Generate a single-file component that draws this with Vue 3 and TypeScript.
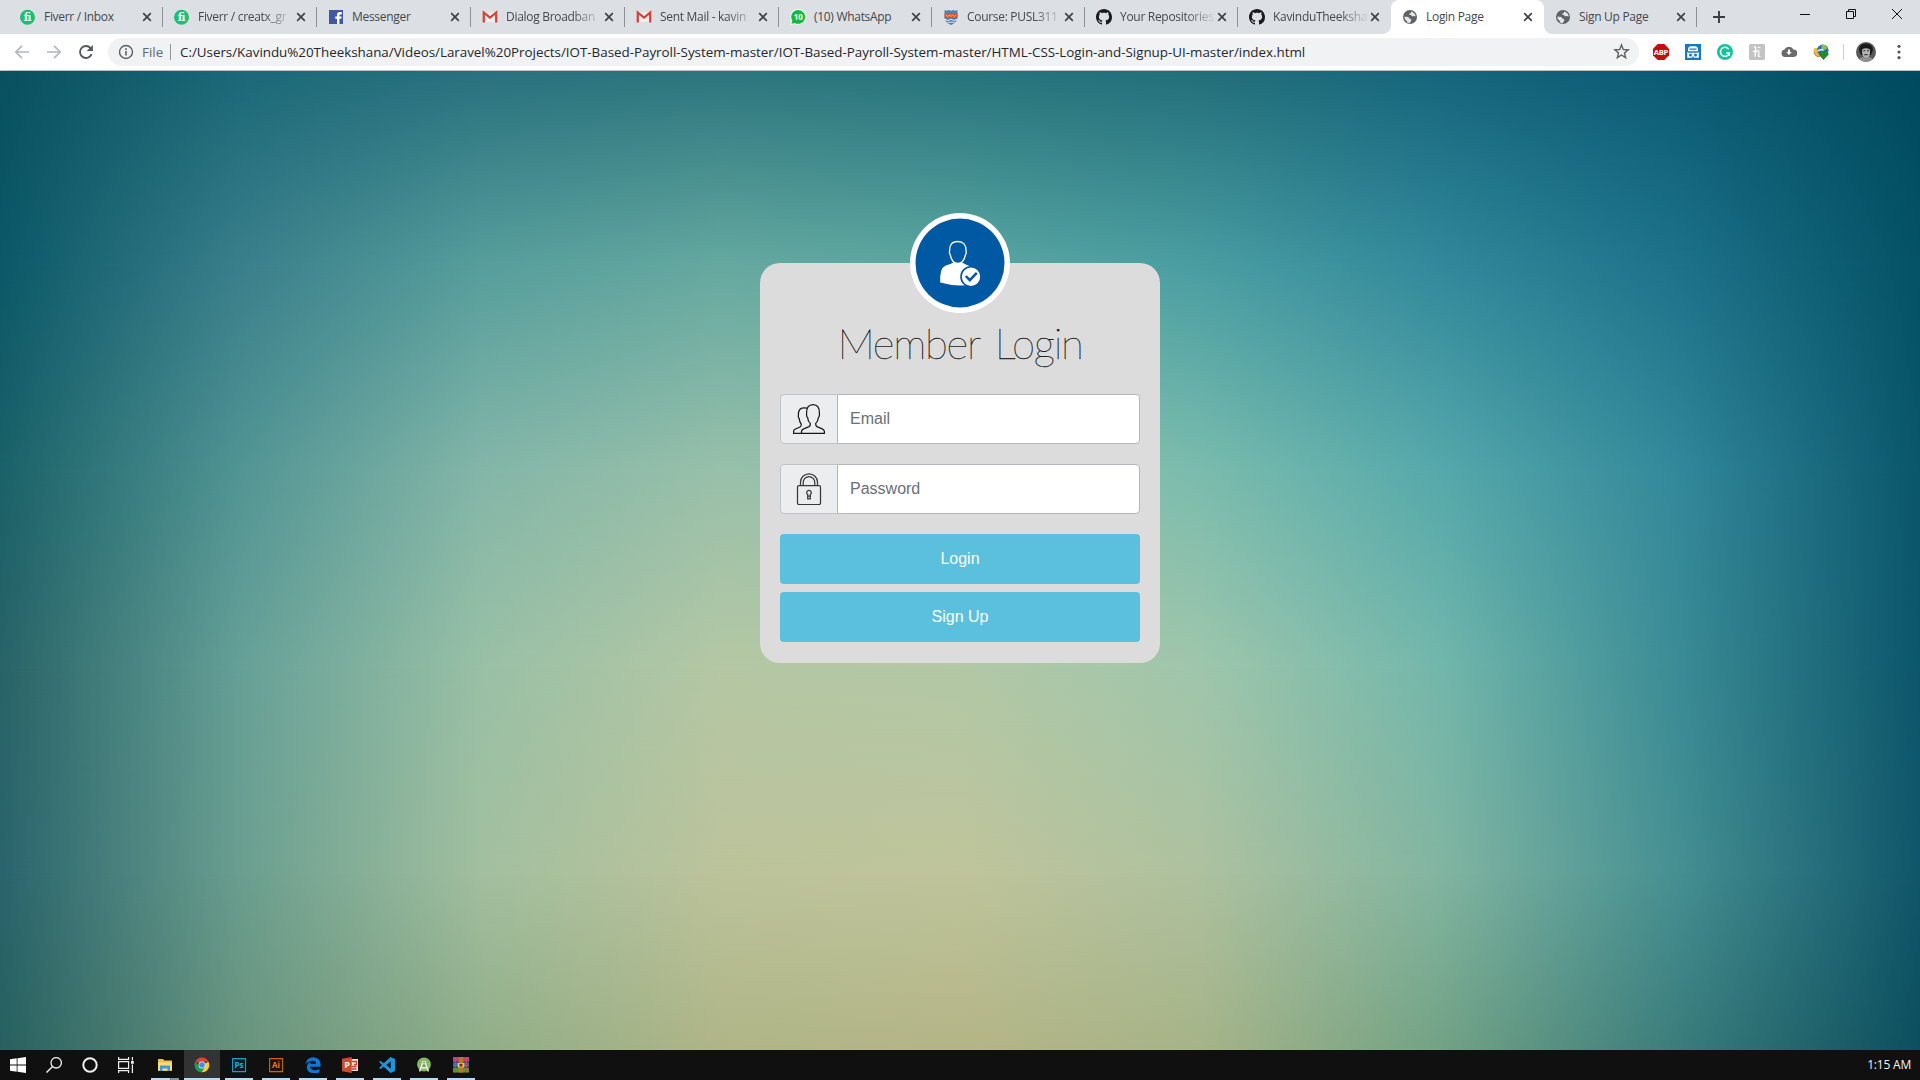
<script setup lang="ts">
interface Tab {
  title: string
  icon: 'fiverr' | 'facebook' | 'gmail' | 'whatsapp' | 'shield' | 'github' | 'globe'
  width: number
  faded?: boolean
  active?: boolean
}

const tabs: Tab[] = [
  { title: 'Fiverr / Inbox', icon: 'fiverr', width: 154 },
  { title: 'Fiverr / creatx_gr', icon: 'fiverr', width: 154, faded: true },
  { title: 'Messenger', icon: 'facebook', width: 154 },
  { title: 'Dialog Broadban', icon: 'gmail', width: 154, faded: true },
  { title: 'Sent Mail - kavin', icon: 'gmail', width: 154, faded: true },
  { title: '(10) WhatsApp', icon: 'whatsapp', width: 153 },
  { title: 'Course: PUSL311', icon: 'shield', width: 153, faded: true },
  { title: 'Your Repositories', icon: 'github', width: 153, faded: true },
  { title: 'KavinduTheeksha', icon: 'github', width: 153, faded: true },
  { title: 'Login Page', icon: 'globe', width: 153, active: true },
  { title: 'Sign Up Page', icon: 'globe', width: 153 },
]

const address =
  'C:/Users/Kavindu%20Theekshana/Videos/Laravel%20Projects/IOT-Based-Payroll-System-master/IOT-Based-Payroll-System-master/HTML-CSS-Login-and-Signup-UI-master/index.html'

// Backdrop: rows of colours, each fading into the next one from top to bottom.
const backdrop: { at: number; colors: string[] }[] = [
  { at: 0, colors: ['#08505f', '#1c6878', '#29717e', '#2c767e', '#28747d', '#236f7a', '#16667d', '#0a5b73', '#014a5e'] },
  { at: 20, colors: ['#0c5868', '#3a7f8b', '#579e9c', '#66a9a0', '#5ba7a1', '#4a9ea2', '#33899b', '#1e728a', '#045265'] },
  { at: 41, colors: ['#1a6168', '#529594', '#84b6a8', '#99c0aa', '#93c2ad', '#7bbcad', '#56a9ab', '#33889a', '#0a566b'] },
  { at: 61, colors: ['#286367', '#66a097', '#99c0a6', '#b5c7a4', '#b3c8a6', '#9fc6ac', '#73b7ab', '#3a8b95', '#0d566b'] },
  { at: 82, colors: ['#2a646c', '#6a9e8f', '#a2bf9f', '#bcc39b', '#bfc49b', '#aec19f', '#82b5a1', '#458f92', '#10566a'] },
  { at: 100, colors: ['#27605f', '#68937d', '#90ad88', '#afb587', '#b4b586', '#a6b388', '#72a285', '#3a7c7b', '#0c4f5e'] },
]

function layerStyle(i: number) {
  const row = backdrop[i]
  const style: Record<string, string> = {
    backgroundImage: `linear-gradient(to right, ${row.colors.join(', ')})`,
  }
  if (i > 0) {
    style.maskImage = `linear-gradient(to bottom, transparent ${backdrop[i - 1].at}%, #000 ${row.at}%)`
  }
  return style
}
</script>

<template>
  <div class="screen">
    <header class="tabstrip">
      <div
        v-for="(tab, i) in tabs"
        :key="i"
        class="tab"
        :class="{ active: tab.active, plain: i === 8 }"
        :style="{ width: tab.width + 'px' }"
      >
        <svg v-if="tab.icon === 'fiverr'" class="fav" viewBox="0 0 16 16">
          <circle cx="7.500" cy="8.300" r="7.500" fill="#1dbf73" />
          <text x="7.500" y="12" text-anchor="middle" class="fi">fi</text>
        </svg>
        <svg v-else-if="tab.icon === 'facebook'" class="fav" viewBox="0 0 16 16">
          <rect x="1" y="1" width="14" height="14" fill="#4159a0" />
          <path d="M9 15V9.800H7.200V7.400H9V5.800Q9 3 11.800 3h2v2.400h-1.400q-1 0-1 1v1h2.300l-.4 2.400h-1.900V15z" fill="#fff" />
        </svg>
        <svg v-else-if="tab.icon === 'gmail'" class="fav" viewBox="0 0 16 16">
          <path d="M2 3.400h12V13H2z" fill="#f1eeee" />
          <path d="M1.800 13.600V3.600L8 8.600l6.200-5v10" fill="none" stroke="#d1453b" stroke-width="2.300" />
        </svg>
        <svg v-else-if="tab.icon === 'whatsapp'" class="fav" viewBox="0 0 16 16">
          <path d="M8.200 0a7.900 7.900 0 1 1-3.600 15L.2 16l1-4.300A7.900 7.900 0 0 1 8.200 0z" fill="#eefaf0" />
          <path d="M8.200 1a6.900 6.900 0 1 1-3.400 12.900L1.500 14.700l.8-3.200A6.900 6.900 0 0 1 8.200 1z" fill="#12b93c" />
          <text x="8.300" y="10.900" text-anchor="middle" font-size="8" font-weight="700" fill="#fff">10</text>
        </svg>
        <svg v-else-if="tab.icon === 'shield'" class="fav" viewBox="0 0 16 16">
          <path d="M1.500 1l2 .8L5.600 1 8 1.800 10.400 1l2 .8L14.500 1v7q0 5-6.500 8-6.500-3-6.500-8z" fill="#4a83b8" />
          <path d="M1.500 4.500h13v4.600h-13z" fill="#e2522e" />
          <path d="M3 6l1.500 1.500L6.500 6 8 7.500 9.500 6l2 1.500L13 6" fill="none" stroke="#f6c445" stroke-width="1" />
          <path d="M2 10.300q3 2.500 6 0 3 2.500 6 0M4.500 13q2 1 3.500 0 1.500 1 3.500 0" fill="none" stroke="#e9eef4" stroke-width="1" />
        </svg>
        <svg v-else-if="tab.icon === 'github'" class="fav" viewBox="0 0 16 16">
          <path fill="#1b1b1f" d="M8 0C3.580 0 0 3.580 0 8c0 3.540 2.290 6.530 5.470 7.590.4.070.55-.17.55-.38 0-.19-.01-.82-.01-1.490-2.010.37-2.530-.49-2.690-.94-.09-.23-.48-.94-.82-1.130-.28-.15-.68-.52-.01-.53.63-.01 1.080.58 1.230.82.72 1.210 1.870.87 2.330.66.07-.52.28-.87.51-1.070-1.780-.2-3.640-.89-3.640-3.950 0-.87.31-1.590.82-2.150-.08-.2-.36-1.020.08-2.120 0 0 .67-.21 2.200.82.64-.18 1.320-.27 2-.27s1.360.09 2 .27c1.530-1.040 2.200-.82 2.200-.82.44 1.100.16 1.920.08 2.120.51.56.82 1.270.82 2.150 0 3.070-1.870 3.750-3.650 3.950.29.25.54.73.54 1.480 0 1.070-.01 1.930-.01 2.200 0 .21.15.46.55.38A8.010 8.010 0 0 0 16 8c0-4.420-3.580-8-8-8z" />
        </svg>
        <svg v-else class="fav" viewBox="0 0 16 16">
          <circle cx="8" cy="8" r="7" fill="#5f6368" />
          <path d="M2.500 7.500q1.500.5 2.700.2 2 .3 2 1.700 2.500 0 2.200 1.600l-1.600 3.200-2.600-.6q-.2-2-1.200-2.300-2-1-1.500-3.800zM9.300 2.400L8.800 4q-1.800.2-1.600 1.800 1.800-.2 2.300 1 1.800 1 3 .2l1.100.5q.2-3.300-4.300-5.100z" fill="#e3e5e8" />
        </svg>
        <span class="tab-title" :class="{ faded: tab.faded }">{{ tab.title }}</span>
        <svg class="tab-close" viewBox="0 0 10 10"><path d="M1.200 1.200l7.600 7.600M8.800 1.200L1.200 8.800" stroke="#3f4246" stroke-width="1.700" /></svg>
      </div>
      <svg class="new-tab" viewBox="0 0 12 12"><path d="M6 0v12M0 6h12" stroke="#3a3d41" stroke-width="1.900" /></svg>
      <div class="window-buttons">
        <svg viewBox="0 0 12 12"><path d="M1 6.500h10" stroke="#111" /></svg>
        <svg viewBox="0 0 12 12" fill="none" stroke="#111"><path d="M1.500 3.500h7v7h-7zM3.500 3.500v-2h7v7h-2" /></svg>
        <svg viewBox="0 0 12 12"><path d="M1 1l10 10M11 1L1 11" stroke="#111" /></svg>
      </div>
    </header>

    <nav class="toolbar">
      <svg class="nav-icon" viewBox="0 0 16 16" fill="none" stroke="#b5b7b9" stroke-width="1.700"><path d="M15 8H2M8 1.800L1.800 8 8 14.200" /></svg>
      <svg class="nav-icon" viewBox="0 0 16 16" fill="none" stroke="#b5b7b9" stroke-width="1.700"><path d="M1 8h13M8 1.800L14.200 8 8 14.200" /></svg>
      <svg class="nav-icon" viewBox="0 0 16 16"><path d="M13.600 10.200A6 6 0 1 1 12.400 3.900L14 5.500" fill="none" stroke="#54575b" stroke-width="1.900" /><path d="M14.900.9v6.200H8.700z" fill="#54575b" /></svg>
      <div class="omnibox">
        <svg class="info" viewBox="0 0 16 16"><circle cx="8" cy="8" r="6.500" fill="none" stroke="#5c5f63" stroke-width="1.400" /><path d="M8 7v4.500M8 4.300v1.600" stroke="#5c5f63" stroke-width="1.600" /></svg>
        <span class="scheme">File</span>
        <i class="divider"></i>
        <span class="address">{{ address }}</span>
        <svg class="star" viewBox="0 0 16 16"><path d="M8 1.800l1.700 4.300 4.600.3-3.500 2.900 1.100 4.500L8 11.300l-3.900 2.500 1.100-4.500L1.700 6.400l4.600-.3z" fill="none" stroke="#5c5f63" stroke-width="1.300" /></svg>
      </div>
      <div class="extensions">
        <svg viewBox="0 0 16 16"><path d="M4.700 0h6.600L16 4.700v6.600L11.300 16H4.700L0 11.300V4.700z" fill="#c70d0d" /><text x="8" y="10.800" text-anchor="middle" font-size="7.600" font-weight="700" fill="#fff" textLength="14.400">ABP</text></svg>
        <svg viewBox="0 0 16 16"><path d="M0 0h16v16H0z" fill="#1778c4" /><path d="M3 8.200V5.500Q3.300 2.200 6 2.200h4q2.700 0 3 3.300v2.700h.8v5.600H2.200V8.200z" fill="#fff" /><path d="M4.500 5.200h7M3 8h10" stroke="#1778c4" stroke-width="1.300" /><circle cx="5.500" cy="11" r="1.500" fill="#1778c4" /><circle cx="10.500" cy="11" r="1.500" fill="#1778c4" /><path d="M6.500 13.800L8 12.300l1.500 1.500z" fill="#1778c4" /></svg>
        <svg viewBox="0 0 16 16"><circle cx="8" cy="8" r="8" fill="#15c39a" /><path d="M11.600 5.200A4.500 4.500 0 1 0 12.300 9H9.200M12.300 8.700v3.200" fill="none" stroke="#fff" stroke-width="1.500" /></svg>
        <svg viewBox="0 0 16 16"><rect width="16" height="16" rx="1.500" fill="#c3c3c3" /><path d="M5 3.600q2-1.500 1.700.4L6 12.800M6.300 9q2.300-3.400 3.300-2.400.7.800-.2 4.800-.1 1.600 1.800.8M3.800 7.600l3-.8M9 3l2.500 1" fill="none" stroke="#fff" stroke-width="1.300" /></svg>
        <svg viewBox="0 0 16 16"><path d="M4 13a3.800 3.800 0 0 1-.5-7.500 5 5 0 0 1 9-.1A3.800 3.800 0 0 1 12.500 13z" fill="#686b6e" /><path d="M7 5.500v2.500H5.200L8 11l2.800-3H9V5.500z" fill="#fff" /></svg>
        <svg viewBox="0 0 16 16"><ellipse cx="5.500" cy="8" rx="5.600" ry="3.400" transform="rotate(35 5.500 8)" fill="#e6c23a" /><circle cx="9.800" cy="6.300" r="5.700" fill="#2c6db5" /><path d="M8.500.8q4-.7 6.200 3.300l-3 2-3-1.600z" fill="#8bc34a" /><path d="M4.500 7q4-2.500 6-.5" fill="none" stroke="#dfeaf5" stroke-width="1.600" /><path d="M7.500 8h7.500l.6 2.500L10.500 16 6 11z" fill="#228b2f" /><path d="M1 8q1 4.500 6 4.500" fill="none" stroke="#d98d2c" stroke-width="1.200" /></svg>
      </div>
      <i class="tool-divider"></i>
      <svg class="avatar" viewBox="0 0 20 20">
        <circle cx="10" cy="10" r="10" fill="#58595a" />
        <path d="M3 8q0-6.500 7-6.500T17 8l-2 5H5z" fill="#1a1a1a" />
        <path d="M6.200 7.200q3.600-2 7.600 0 .8 5.300-1.300 7.700-2.400 2.500-4.800 0-2.100-2.700-1.500-7.700z" fill="#b4b4b4" />
        <path d="M7.300 8.800h2M11 8.800h2M8.300 13q1.800-.9 3.400 0" stroke="#292929" stroke-width="1.100" fill="none" />
        <path d="M3 17q4-3 5-1.500h4q1-1.500 5 1.500-3 3-7 3t-7-3z" fill="#909090" />
      </svg>
      <svg class="menu" viewBox="0 0 4 16"><g fill="#56595c"><circle cx="2" cy="2.300" r="1.600" /><circle cx="2" cy="8" r="1.600" /><circle cx="2" cy="13.700" r="1.600" /></g></svg>
    </nav>

    <main class="page">
      <div v-for="(_, i) in backdrop" :key="i" class="layer" :style="layerStyle(i)"></div>
      <section class="card">
        <svg class="badge" viewBox="0 0 100 100">
          <circle cx="50" cy="50" r="50" fill="#fff" />
          <circle cx="50" cy="50" r="44.500" fill="#0259a3" />
          <path d="M30.200 69.500q-.8-14.500 5.600-17 5-1.600 8.200-3.300 3.500 3.300 7.600 0 3 1.800 7 3.600 5 2 5.500 7l-3 11.800q-15 2.500-30.900-2.100z" fill="#fff" />
          <path d="M39.700 38q-.5-9.500 8-9.500T56 38q.9 1.600-.6 4-1.800 8.500-7.600 8.500T40.300 42q-1.500-2.400-.6-4z" fill="#0259a3" stroke="#fff" stroke-width="1.300" />
          <circle cx="61" cy="63.700" r="10" fill="#fff" stroke="#0259a3" stroke-width="1.600" />
          <path d="M55.800 63l4 4.200 7-7.400" fill="none" stroke="#0259a3" stroke-width="2.500" />
        </svg>
        <h1>Member Login</h1>
        <div class="field">
          <span class="addon">
            <svg viewBox="0 0 32 32" fill="none" stroke="#18191b" stroke-width="1.250">
              <path d="M8.500 30.400v-1.800q0-1.800 2.200-2.700l5.300-2.300q1.500-.8 1.400-3-2.500-2.300-2.800-6-1.300-1.200-1-3.500Q13.200 1.500 20 1.500t6.400 9.600q.3 2.300-1 3.500-.4 3.700-2.800 6 0 2.200 1.400 3l5.200 2.300q2.200.9 2.200 2.700v1.800z" />
              <path d="M14 5.200q-1.300-.5-3.500-.4-5.400.3-5.100 7.600-.4 2.200.8 3.200.3 3.400 2 5.500.2 2-1.200 2.900l-4.500 2q-1.900.8-1.900 2.500v1.900h8" />
            </svg>
          </span>
          <input type="text" placeholder="Email" />
        </div>
        <div class="field">
          <span class="addon">
            <svg viewBox="0 0 32 32" fill="none" stroke="#36383b" stroke-width="1.250">
              <rect x="4.500" y="12.500" width="23" height="19" rx="1.500" />
              <path d="M7.500 12.500V9.300a8.500 8.500 0 0 1 17 0v3.200M10.200 12.500V9.500a5.800 5.800 0 0 1 11.600 0v3" />
              <path d="M14.700 21.500a2.300 2.300 0 1 1 2.600 0v4.300h-2.600zM14.700 23h2.600" />
            </svg>
          </span>
          <input type="password" placeholder="Password" />
        </div>
        <button type="button">Login</button>
        <button type="button">Sign Up</button>
      </section>
    </main>

    <footer class="taskbar">
      <div class="task sys"><svg viewBox="0 0 16 16"><path d="M0 2.200L6.700 1.300v6.300H0zM7.500 1.200L16 0v7.600H7.500zM0 8.400h6.700v6.300L0 13.800zM7.500 8.400H16V16l-8.500-1.200z" fill="#fff" /></svg></div>
      <div class="task sys"><svg viewBox="0 0 16 16"><path d="M6.300 9.800L.5 15.600" stroke="#eee" stroke-width="1.400" /><circle cx="10.200" cy="5.800" r="5.200" fill="none" stroke="#eee" stroke-width="1.300" /></svg></div>
      <div class="task sys"><svg viewBox="0 0 16 16"><circle cx="8" cy="8" r="6.700" fill="none" stroke="#eee" stroke-width="2" /></svg></div>
      <div class="task sys"><svg viewBox="0 0 16 16" fill="none" stroke="#eee" stroke-width="1.200"><path d="M.6 0v2.400h10V0M.6 4.600h10v6.800H.6zM.6 16v-2.400h10V16M14.400 0v3.500M14.400 7.500V16" /><path d="M13 4h2.800v2.800H13z" fill="#eee" stroke="none" /></svg></div>
      <div class="task first split"><svg viewBox="0 0 16 16"><path d="M1 2h5l1.300 1.500H15V14H1z" fill="#f2c14c" /><path d="M1 5.500h14V13H1z" fill="#fbdc7c" /><path d="M3 14V8.500h10V14h-2.500v-2.500h-5V14z" fill="#3c9ae0" /></svg></div>
      <div class="task current"><svg viewBox="0 0 16 16"><path d="M8 8L1.500 4.300A7.200 7.200 0 0 1 14.500 4.700H8z" fill="#dc4437" /><path d="M8 8l6.500-3.300A7.200 7.200 0 0 1 7.500 15.200L11 9z" fill="#fbc934" /><path d="M1.500 4.300A7.200 7.200 0 0 0 7.500 15.200L10.500 10 5 9.500z" fill="#1a9d57" /><circle cx="8" cy="8" r="3.500" fill="#eee" /><circle cx="8" cy="8" r="2.800" fill="#4688f1" /></svg></div>
      <div class="task"><svg viewBox="0 0 16 16"><path d="M1.600 1.600h13v13h-13z" fill="#0b1d26" stroke="#1aa0c4" stroke-width="1.100" /><text x="8" y="11" text-anchor="middle" font-size="8" font-weight="700" fill="#1eb5dc">Ps</text></svg></div>
      <div class="task"><svg viewBox="0 0 16 16"><path d="M1.600 1.600h13v13h-13z" fill="#241005" stroke="#c8651b" stroke-width="1.100" /><text x="8" y="11" text-anchor="middle" font-size="8" font-weight="700" fill="#e87c22">Ai</text></svg></div>
      <div class="task"><svg viewBox="0 0 16 16"><path d="M.5 7.200Q1.600.3 8.500.3q7 .4 7.100 7.700v1.700H5.200q.4 3.300 4.500 3.500 2.700 0 4.700-1.300v3.300q-2.700 1.200-5.800 1.100-6.700-.6-6.800-6.300.3-4 4.200-5.500-.9 1-1 2.200h6.100q-.1-2.900-3.500-3Q3.300 3.700.5 7.200z" fill="#0b79d8" /></svg></div>
      <div class="task"><svg viewBox="0 0 16 16"><path d="M9 2h7v12H9z" fill="#f4e4df" /><path d="M10 4.500h4.500v3H12M10 9.500h4.500M10 12h4.500" fill="none" stroke="#c8452a" stroke-width="1.300" /><path d="M0 1.700L9.800 0v16L0 14.300z" fill="#cc4a2d" /><text x="5" y="11.200" text-anchor="middle" font-size="9" font-weight="700" fill="#fff">P</text></svg></div>
      <div class="task"><svg viewBox="0 0 16 16"><path d="M11.500 0L16 2v12l-4.500 2L4.700 9.700 1.600 12 0 11.200 3 8 0 4.800 1.600 4l3.100 2.300zM11.700 4.500L7.200 8l4.500 3.500z" fill="#1e94dc" fill-rule="evenodd" /></svg></div>
      <div class="task"><svg viewBox="0 0 16 16"><circle cx="8" cy="7.500" r="6.900" fill="#86b860" /><path d="M4.300 9.500L8 3l3.700 6.500z" fill="#6c9c4a" /><path d="M7.300 4L3.600 14.500M8.700 4l3.700 10.500M5 10.200q3 1.600 6 0" stroke="#eceeea" stroke-width="1.500" fill="none" /><circle cx="8" cy="5.600" r="1.900" fill="#dfe8d8" /><circle cx="8" cy="5.600" r=".8" fill="#55713f" /></svg></div>
      <div class="task"><svg viewBox="0 0 16 16"><path d="M0 0h16v5H0z" fill="#b64387" /><path d="M0 5h16v5.500H0z" fill="#3d68b8" /><path d="M0 10.500h16V15.500H0z" fill="#4d9a3c" /><path d="M0 5h16M0 10.300h16" stroke="#222" stroke-width=".7" /><path d="M5.700 0h4.600v15.500H5.700z" fill="#b9762c" /><path d="M4.600 6h6.800v4.500H4.600z" fill="#ecc05a" /><path d="M6.500 6.800h3v2.800h-3z" fill="#6c3d19" /><path d="M2.300 0v15.500M13.400 0v15.500" stroke="#d34e3d" stroke-width="1" /></svg></div>
      <time class="clock">1:15 AM</time>
    </footer>
  </div>
</template>

<style>
html,
body {
  margin: 0;
  overflow: hidden;
}
</style>

<style scoped>
.screen {
  display: flex;
  flex-direction: column;
  width: 1920px;
  height: 1080px;
  overflow: hidden;
  font-family: 'Open Sans', 'Noto Sans', sans-serif;
}
svg {
  display: block;
  flex: none;
}
.tabstrip {
  display: flex;
  flex: none;
  align-items: stretch;
  height: 34px;
  padding-left: 9px;
  box-sizing: border-box;
  background: #dcdfe4;
}
.tab {
  display: flex;
  flex: none;
  align-items: center;
  box-sizing: border-box;
  padding: 0 11px;
  background-image: linear-gradient(#8d9095, #8d9095);
  background-repeat: no-repeat;
  background-size: 1px 20px;
  background-position: right 7px;
}
.tab.plain {
  background-image: none;
}
.tab.active {
  background: #fff;
  border-radius: 8px 8px 0 0;
  position: relative;
}
.tab.active::before,
.tab.active::after {
  content: '';
  position: absolute;
  bottom: 0;
  width: 8px;
  height: 8px;
}
.tab.active::before {
  left: -8px;
  background: radial-gradient(circle at 0 0, transparent 7.5px, #fff 8px);
}
.tab.active::after {
  right: -8px;
  background: radial-gradient(circle at 100% 0, transparent 7.5px, #fff 8px);
}
.fav {
  width: 16px;
  height: 16px;
}
.fi {
  fill: #fff;
  font: 700 10.5px 'DejaVu Serif', serif;
}
.tab-title {
  margin-left: 8px;
  color: #45484c;
  font-size: 12px;
  line-height: 18px;
  letter-spacing: -0.3px;
  white-space: nowrap;
}
.tab-title.faded {
  mask-image: linear-gradient(to right, #000 66px, rgba(0, 0, 0, 0.15) 92px);
}
.tab-close {
  width: 10px;
  height: 10px;
  margin-left: auto;
}
.new-tab {
  width: 12px;
  height: 12px;
  margin: 11px 0 0 16px;
}
.window-buttons {
  display: flex;
  gap: 34px;
  margin: 8px 17px 0 auto;
}
.window-buttons svg {
  width: 12px;
  height: 12px;
}
.toolbar {
  display: flex;
  flex: none;
  align-items: center;
  height: 37px;
  padding: 0 19px 1px 14px;
  box-sizing: border-box;
  background: #fff;
  border-bottom: 1px solid #b9c3c5;
}
.nav-icon {
  width: 16px;
  height: 16px;
  margin-right: 16px;
}
.omnibox {
  display: flex;
  align-items: center;
  width: 1531px;
  height: 28px;
  margin-left: -2px;
  padding: 0 9px 0 10px;
  box-sizing: border-box;
  border-radius: 14px;
  background: #f0f2f4;
}
.info {
  width: 16px;
  height: 16px;
}
.scheme {
  width: 28px;
  margin-left: 8px;
  color: #66696d;
  font-size: 13.4px;
}
.divider {
  width: 1px;
  height: 16px;
  background: #94979a;
}
.address {
  flex: 1;
  margin-left: 9px;
  color: #25282c;
  font-size: 13.4px;
  letter-spacing: -0.02px;
  white-space: nowrap;
}
.star {
  width: 17px;
  height: 17px;
}
.extensions {
  display: flex;
  gap: 16px;
  margin-left: 14px;
}
.extensions svg {
  width: 16px;
  height: 16px;
}
.tool-divider {
  width: 1px;
  height: 16px;
  margin: 0 12px 0 14px;
  background: #cfd1d3;
}
.avatar {
  width: 20px;
  height: 20px;
}
.menu {
  width: 4px;
  height: 16px;
  margin-left: auto;
}
.page {
  position: relative;
  display: flex;
  flex: 1;
  justify-content: center;
  align-items: flex-start;
}
.layer {
  position: absolute;
  inset: 0;
}
.card {
  position: relative;
  display: flex;
  flex-direction: column;
  width: 400px;
  height: 400px;
  margin-top: 192px;
  padding: 0 20px;
  box-sizing: border-box;
  border-radius: 20px;
  background: #dcdcdc;
}
.badge {
  width: 100px;
  height: 100px;
  margin: -50px auto 0;
}
h1 {
  height: 61px;
  margin: 0 0 20px;
  color: #222;
  font-family: Lato, sans-serif;
  font-size: 42px;
  font-weight: 100;
  line-height: 61px;
  letter-spacing: -1.3px;
  word-spacing: 5px;
  -webkit-text-stroke: 0.35px #222;
  text-align: center;
  white-space: nowrap;
}
.field {
  display: flex;
  flex: none;
  height: 50px;
  margin-bottom: 20px;
}
.addon {
  display: flex;
  flex: none;
  align-items: center;
  justify-content: center;
  width: 58px;
  box-sizing: border-box;
  border: 1px solid #bfc3c7;
  border-radius: 4px 0 0 4px;
  background: #ecedef;
}
.addon svg {
  width: 32px;
  height: 32px;
}
input {
  flex: 1;
  min-width: 0;
  margin-left: -1px;
  padding: 0 12px;
  box-sizing: border-box;
  border: 1px solid #b3b7bb;
  border-radius: 0 4px 4px 0;
  background: #fff;
  font: 16px 'Liberation Sans', Arial, sans-serif;
}
input::placeholder {
  color: #6a7077;
  opacity: 1;
}
button {
  flex: none;
  height: 50px;
  margin-bottom: 8px;
  padding: 0;
  border: 0;
  border-radius: 4px;
  background: #5bbfde;
  color: #fff;
  font: 16px 'Liberation Sans', Arial, sans-serif;
}
.taskbar {
  display: flex;
  flex: none;
  height: 30px;
  background: #101010;
}
.task {
  display: flex;
  flex: none;
  align-items: center;
  justify-content: center;
  width: 36px;
  margin-right: 1px;
  background-image: linear-gradient(#b6dcf4, #b6dcf4);
  background-repeat: no-repeat;
  background-size: 28px 2px;
  background-position: 4px 28px;
}
.task.sys {
  margin-right: 0;
  background-image: none;
}
.task.first {
  margin-left: 3px;
}
.task.split {
  background-image: linear-gradient(to right, #b6dcf4 19px, #4c5e6b 19px, #7b96a8 20px);
}
.task.current {
  background-color: #333;
  background-size: 36px 2px;
  background-position: 0 28px;
}
.task svg {
  width: 16px;
  height: 16px;
}
.clock {
  margin: 0 9px 0 auto;
  color: #f2f2f2;
  font-size: 12px;
  line-height: 30px;
  letter-spacing: -0.2px;
}
</style>
